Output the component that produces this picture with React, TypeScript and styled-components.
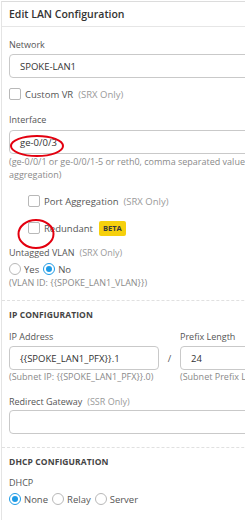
import React from 'react';
import styled, { createGlobalStyle } from 'styled-components';

const GlobalStyle = createGlobalStyle`
  html, body {
    margin: 0;
    padding: 0;
    background: #ffffff;
    overflow: hidden;
  }
  body {
    font-family: 'Open Sans', 'Liberation Sans', sans-serif;
    color: #4a4a4a;
  }
`;

const Panel = styled.div`
  width: 330px;
  margin: 1px 0 0 1px;
  border-top: 1px solid #dcdcdc;
  border-left: 1px solid #e4e4e4;
  min-height: 520px;
  box-sizing: border-box;
`;

const Header = styled.div`
  height: 24px;
  display: flex;
  align-items: center;
  padding-left: 7px;
  border-bottom: 1px solid #e6e6e6;
  font-size: 10.5px;
  font-weight: 600;
  color: #333;
`;

const Body = styled.div`
  padding: 0 7px;
`;

const Label = styled.div<{ $mt?: number }>`
  margin-top: ${(p) => p.$mt ?? 0}px;
  font-size: 9px;
  line-height: 13px;
  color: #555;
  white-space: nowrap;
`;

const Hint = styled.span`
  color: #9a9a9a;
  margin-left: 5px;
`;

const Input = styled.div<{ $mt?: number }>`
  margin-top: ${(p) => p.$mt ?? 3}px;
  height: 24px;
  width: 100%;
  box-sizing: border-box;
  border: 1px solid #c9c9c9;
  border-radius: 4px;
  display: flex;
  align-items: center;
  padding-left: 10px;
  font-size: 9.5px;
  color: #333;
  white-space: nowrap;
`;

const HelpText = styled.div<{ $mt?: number }>`
  margin-top: ${(p) => p.$mt ?? 0}px;
  font-size: 9px;
  line-height: 13px;
  color: #8a8a8a;
  white-space: nowrap;
`;

const CheckRow = styled.div<{ $mt?: number; $indent?: number }>`
  margin-top: ${(p) => p.$mt ?? 0}px;
  padding-left: ${(p) => p.$indent ?? 0}px;
  height: 14px;
  display: flex;
  align-items: center;
  font-size: 9.5px;
  color: #555;
  white-space: nowrap;
`;

const Box = styled.span`
  width: 12px;
  height: 12px;
  box-sizing: border-box;
  border: 1px solid #b8b8b8;
  border-radius: 2px;
  margin-right: 4px;
  flex-shrink: 0;
`;

const Badge = styled.span`
  margin-left: 6px;
  height: 15px;
  padding: 0 4px;
  display: inline-flex;
  align-items: center;
  background: #f6d00c;
  border-radius: 2px;
  font-size: 7.5px;
  font-weight: 700;
  color: #3a3a3a;
`;

const RadioRow = styled.div<{ $mt?: number }>`
  margin-top: ${(p) => p.$mt ?? 0}px;
  height: 14px;
  display: flex;
  align-items: center;
  font-size: 9.5px;
  color: #555;
  white-space: nowrap;
`;

const RadioItem = styled.span`
  display: flex;
  align-items: center;
  margin-right: 4px;
`;

const Radio = styled.span<{ $on?: boolean }>`
  width: 12px;
  height: 12px;
  box-sizing: border-box;
  border-radius: 50%;
  border: 1px solid ${(p) => (p.$on ? '#1e9be6' : '#b8b8b8')};
  margin-right: 3px;
  display: flex;
  align-items: center;
  justify-content: center;
  &::after {
    content: '';
    width: 6px;
    height: 6px;
    border-radius: 50%;
    background: ${(p) => (p.$on ? '#1e9be6' : 'transparent')};
  }
`;

const Divider = styled.div<{ $mt?: number }>`
  margin-top: ${(p) => p.$mt ?? 0}px;
  margin-left: -7px;
  border-top: 1px dashed #e0e0e0;
`;

const SectionTitle = styled.div<{ $mt?: number }>`
  margin-top: ${(p) => p.$mt ?? 0}px;
  font-size: 8.5px;
  line-height: 13px;
  font-weight: 700;
  color: #444;
  letter-spacing: 0.1px;
`;

const IpGrid = styled.div`
  margin-top: 9px;
  display: grid;
  grid-template-columns: 150px 21px 1fr;
  grid-template-rows: 13px 3px 24px 13px;
`;

const Slash = styled.div`
  grid-column: 2;
  grid-row: 3;
  display: flex;
  align-items: center;
  justify-content: center;
  font-size: 9.5px;
  color: #555;
`;

const Annotated = styled.div`
  position: relative;
`;

const Mark = styled.svg`
  position: absolute;
  pointer-events: none;
  overflow: visible;
`;

export default function App() {
  return (
    <>
      <GlobalStyle />
      <Panel>
        <Header>Edit LAN Configuration</Header>
        <Body>
          <Label $mt={11}>Network</Label>
          <Input>SPOKE-LAN1</Input>

          <CheckRow $mt={9}>
            <Box />
            Custom VR<Hint>(SRX Only)</Hint>
          </CheckRow>

          <Label $mt={12}>Interface</Label>
          <Annotated>
            <Input $mt={4}>ge-0/0/3</Input>
            <Mark style={{ left: 1, top: 3 }} width="56" height="24">
              <ellipse cx="27" cy="13" rx="26" ry="10" fill="none" stroke="#e3000f" strokeWidth="2" />
            </Mark>
          </Annotated>
          <HelpText $mt={1}>
            (ge-0/0/1 or ge-0/0/1-5 or reth0, comma separated values for
            <br />
            aggregation)
          </HelpText>

          <CheckRow $mt={13} $indent={19}>
            <Box />
            Port Aggregation<Hint>(SRX Only)</Hint>
          </CheckRow>
          <Annotated>
            <CheckRow $mt={13} $indent={19}>
              <Box />
              Redundant
              <Badge>BETA</Badge>
            </CheckRow>
            <Mark style={{ left: 9, top: -2 }} width="38" height="30">
              <ellipse cx="18" cy="15" rx="17.5" ry="14" fill="none" stroke="#e3000f" strokeWidth="2" />
            </Mark>
          </Annotated>

          <Label $mt={11}>
            Untagged VLAN<Hint>(SRX Only)</Hint>
          </Label>
          <RadioRow $mt={3}>
            <RadioItem>
              <Radio />
              Yes
            </RadioItem>
            <RadioItem>
              <Radio $on />
              No
            </RadioItem>
          </RadioRow>
          <HelpText>(VLAN ID: {'{{SPOKE_LAN1_VLAN}}'})</HelpText>

          <Divider $mt={11} />
          <SectionTitle $mt={7}>IP CONFIGURATION</SectionTitle>

          <IpGrid>
            <Label style={{ gridColumn: 1, gridRow: 1 }}>IP Address</Label>
            <Label style={{ gridColumn: 3, gridRow: 1 }}>Prefix Length</Label>
            <Input $mt={0} style={{ gridColumn: 1, gridRow: 3 }}>
              {'{{SPOKE_LAN1_PFX}}'}.1
            </Input>
            <Slash>/</Slash>
            <Input $mt={0} style={{ gridColumn: 3, gridRow: 3 }}>
              24
            </Input>
            <HelpText style={{ gridColumn: 1, gridRow: 4 }}>
              (Subnet IP: {'{{SPOKE_LAN1_PFX}}'}.0)
            </HelpText>
            <HelpText style={{ gridColumn: 3, gridRow: 4 }}>(Subnet Prefix Length)</HelpText>
          </IpGrid>

          <Label $mt={12}>
            Redirect Gateway<Hint>(SSR Only)</Hint>
          </Label>
          <Input $mt={2} />

          <Divider $mt={13} />
          <SectionTitle $mt={7}>DHCP CONFIGURATION</SectionTitle>
          <Label $mt={8}>DHCP</Label>
          <RadioRow $mt={3}>
            <RadioItem>
              <Radio $on />
              None
            </RadioItem>
            <RadioItem>
              <Radio />
              Relay
            </RadioItem>
            <RadioItem>
              <Radio />
              Server
            </RadioItem>
          </RadioRow>
        </Body>
      </Panel>
    </>
  );
}
